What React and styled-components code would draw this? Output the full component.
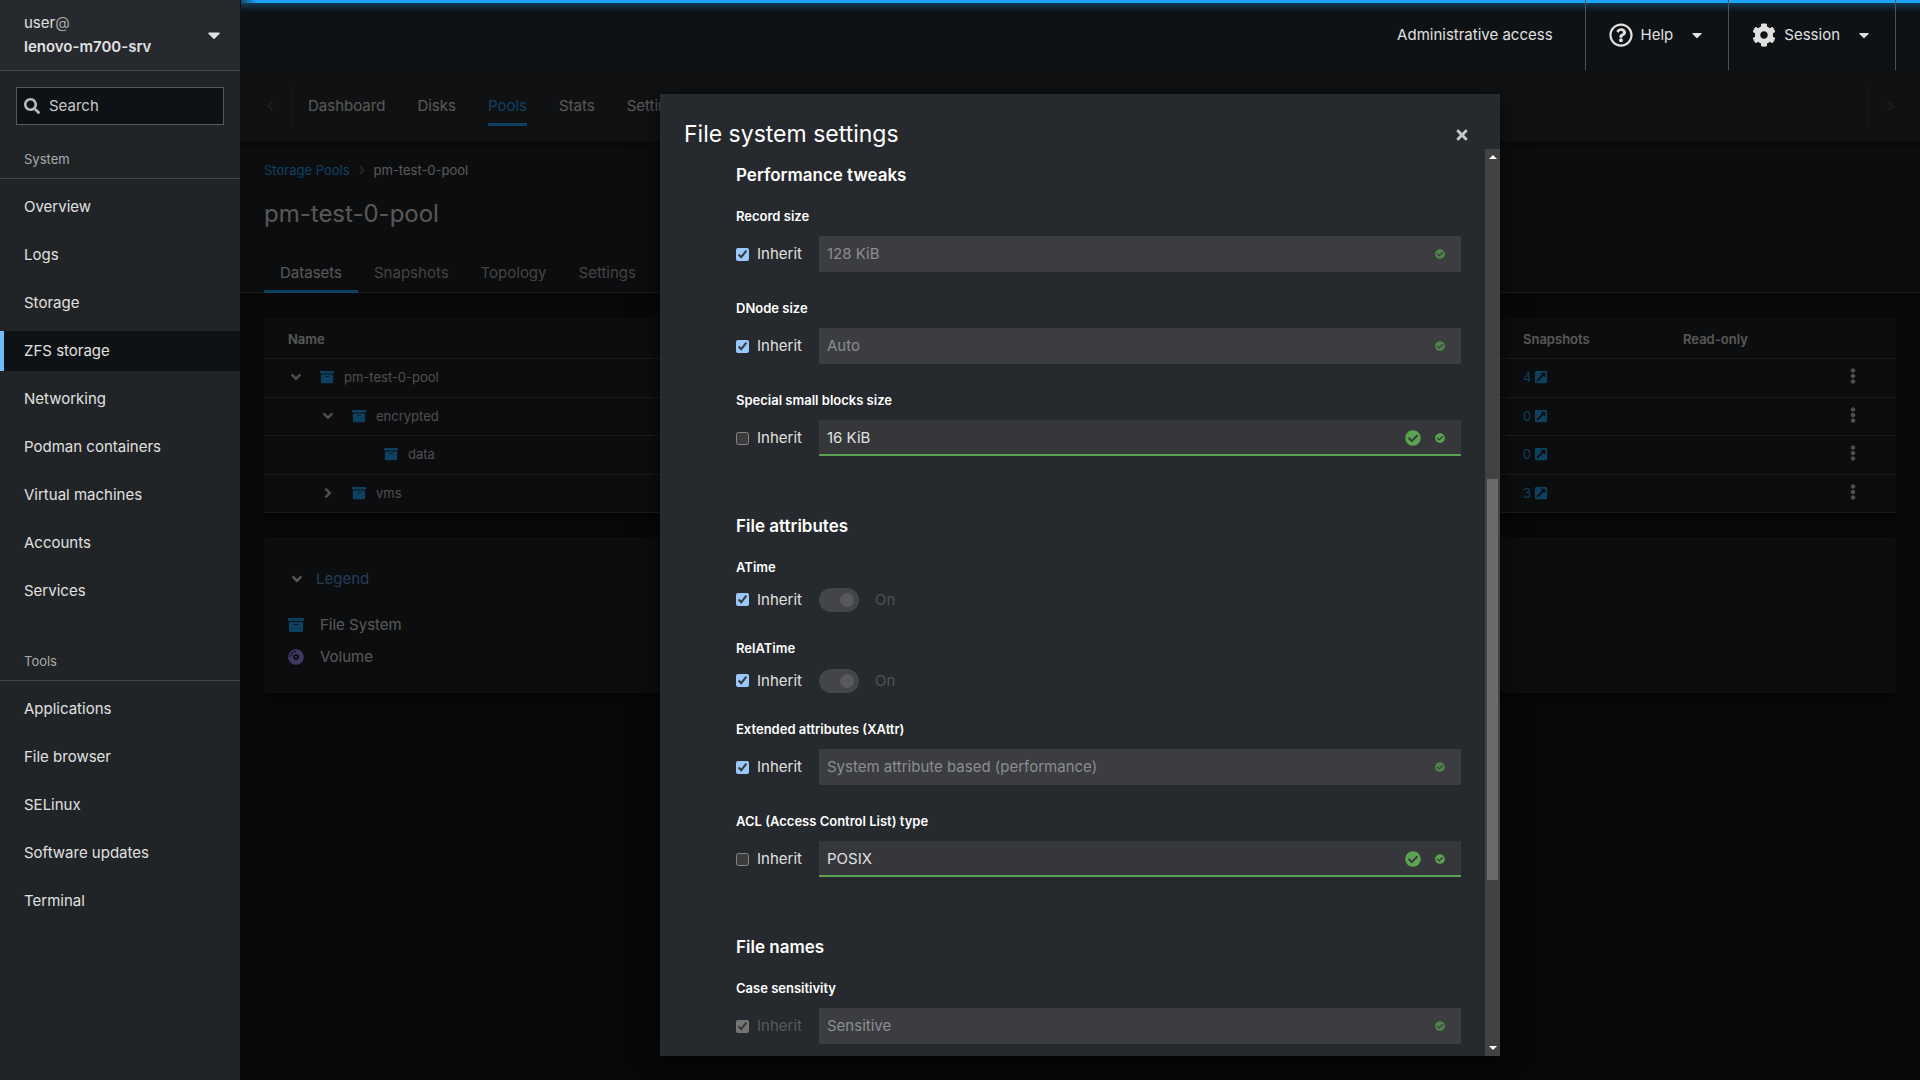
import React from "react";
import styled, { createGlobalStyle, css } from "styled-components";
import {
  FaAngleDown,
  FaAngleLeft,
  FaAngleRight,
  FaArchive,
  FaCaretDown,
  FaCheckCircle,
  FaCog,
  FaCompactDisc,
  FaEllipsisV,
  FaExternalLinkSquareAlt,
  FaRegQuestionCircle,
  FaSearch,
  FaTimes,
} from "react-icons/fa";

const color = {
  text: "#e0e0e0",
  muted: "#aaabac",
  disabled: "#57595c",
  link: "#1fa7f8",
  success: "#5ba352",
  base: "#0f1214",
  panel: "#1b1d21",
  raised: "#26292d",
  sidebar: "#212427",
  line: "#444548",
};

const GlobalStyle = createGlobalStyle`
  *, *::before, *::after { box-sizing: border-box; }
  body {
    margin: 0;
    background: ${color.base};
    color: ${color.text};
    font-family: Inter, "Open Sans", sans-serif;
    font-size: 15px;
    line-height: 24px;
    color-scheme: dark;
  }
  button, input, select { font: inherit; color: inherit; }
  button { border: 0; padding: 0; background: none; text-align: left; cursor: pointer; }
  a { color: inherit; text-decoration: none; }
  h1, h2, h3, ul, ol { margin: 0; padding: 0; font-weight: inherit; }
  ul, ol { list-style: none; }
  svg { display: block; flex: none; }
`;

const Shell = styled.div`
  display: grid;
  grid-template-columns: 240px minmax(0, 1fr);
  height: 100vh;
  overflow: hidden;
`;

/* ---- Sidebar ---- */

const Sidebar = styled.aside`
  background: ${color.sidebar};
`;

const HostSwitcher = styled.button`
  display: flex;
  align-items: center;
  justify-content: space-between;
  width: 100%;
  height: 71px;
  padding: 0 16px 0 24px;
  background: ${color.raised};
  border-bottom: 1px solid ${color.line};
`;

const HostLines = styled.span`
  display: flex;
  flex-direction: column;
`;

const At = styled.span`
  color: ${color.muted};
`;

const HostName = styled.span`
  font-weight: 600;
`;

const SearchBox = styled.label`
  display: flex;
  align-items: center;
  gap: 9px;
  height: 38px;
  margin: 16px 16px 0;
  padding: 0 7px;
  background: ${color.base};
  border: 1px solid #57585a;
  svg { color: #b8bbbe; }
`;

const SearchInput = styled.input`
  flex: 1;
  min-width: 0;
  padding: 0;
  border: 0;
  outline: 0;
  background: none;
  &::placeholder { color: #c9c9ca; opacity: 1; }
`;

const NavSection = styled.section`
  padding: 22px 0 16px;
`;

const NavHeading = styled.h2`
  padding: 0 24px 7px;
  border-bottom: 1px solid ${color.line};
  color: ${color.muted};
  font-size: 13px;
`;

const NavList = styled.ul`
  display: grid;
  gap: 8px;
  padding-top: 8px;
`;

const NavLink = styled.a`
  display: block;
  padding: 8px 20px;
  border-left: 4px solid transparent;
  ${(p) =>
    p.$active &&
    css`
      background: ${color.base};
      border-left-color: #73bcf7;
    `}
`;

/* ---- Top bar ---- */

const Main = styled.div`
  display: flex;
  flex-direction: column;
  min-width: 0;
`;

const TopBar = styled.header`
  position: relative;
  display: flex;
  justify-content: flex-end;
  height: 70px;
  padding-right: 24px;
`;

const LoadingBar = styled.div`
  position: absolute;
  inset: 0 0 auto 1px;
  height: 12px;
  background:
    linear-gradient(90deg, rgba(15, 18, 20, 0.6), transparent 16px) top / 100% 3px no-repeat,
    linear-gradient(#1ca3f9, #1ca3f9) top / 100% 3px no-repeat,
    linear-gradient(#123a56, rgba(18, 58, 86, 0)) bottom / 100% 9px no-repeat;
`;

const TopButton = styled.button`
  position: relative;
  display: flex;
  align-items: center;
  gap: 8px;
  padding: ${(p) => (p.$plain ? "0 32px" : "0 23px")};
  border-right: 1px solid #4f5255;
  span { margin-right: 8px; }
`;

/* ---- Page under the dialog ---- */

const Frame = styled.div`
  position: relative;
  flex: 1;
  min-height: 0;
  overflow: hidden;
`;

const PageNav = styled.nav`
  position: relative;
  display: flex;
  align-items: center;
  height: 72px;
  background: ${color.raised};
  box-shadow: 0 2px 4px rgba(0, 0, 0, 0.5);
`;

const ScrollButton = styled.button`
  display: flex;
  align-items: center;
  justify-content: center;
  width: 52px;
  height: 40px;
  color: ${color.line};
  ${(p) =>
    p.$end
      ? css`margin-left: auto; padding-right: 8px; border-left: 1px solid #3a3b3e;`
      : css`padding-left: 8px; border-right: 1px solid #3a3b3e;`}
`;

const PageLinks = styled.ul`
  display: flex;
  gap: 32px;
  padding-left: 16px;
`;

const PageLink = styled.a`
  display: block;
  padding: 8px 0 5px;
  border-bottom: 3px solid transparent;
  ${(p) => p.$active && css`color: ${color.link}; border-color: ${color.link};`}
`;

const PageHeader = styled.div`
  padding-top: 18px;
  background: ${color.panel};
`;

const Breadcrumb = styled.ol`
  display: flex;
  align-items: center;
  gap: 5px;
  padding: 0 24px;
  font-size: 13px;
  line-height: 20px;
  a { color: ${color.link}; }
  svg { color: #57585a; }
`;

const Crumb = styled.li`
  display: flex;
  align-items: center;
  gap: 5px;
`;

const PageTitle = styled.h1`
  padding: 18px 24px 23px;
  font-size: 24px;
  line-height: 32px;
`;

const Tabs = styled.div`
  display: flex;
  height: 40px;
  padding: 0 24px;
  box-shadow: inset 0 -1px ${color.line};
`;

const Tab = styled.button`
  padding: 2px 16px 0;
  border-bottom: 3px solid transparent;
  color: ${color.muted};
  ${(p) => p.$active && css`color: ${color.text}; border-color: ${color.link};`}
`;

const Content = styled.main`
  display: grid;
  gap: 24px;
  padding: 24px;
`;

const Card = styled.section`
  background: ${color.panel};
  box-shadow: 0 4px 8px rgba(0, 0, 0, 0.6);
`;

const Table = styled.table`
  width: 100%;
  table-layout: fixed;
  border-collapse: separate;
  border-spacing: 0;
  font-size: 13px;
  line-height: 20px;
  th, td { padding: 0; text-align: left; border-bottom: 1px solid ${color.line}; }
  th { height: 42px; padding-top: 3px; font-weight: 600; }
  td { height: 38px; padding-bottom: 2px; color: #c6c7c8; }
  tbody tr:nth-child(odd) td { height: 39px; }
  th:first-child { padding-left: 24px; }
`;

const NameCol = styled.col``;
const Col = styled.col`
  width: ${(p) => p.$w}px;
`;

const NameCell = styled.div`
  display: flex;
  align-items: center;
  padding-left: ${(p) => 24 + p.$depth * 32}px;
`;

const Expander = styled.button`
  display: flex;
  justify-content: center;
  width: 16px;
  margin-right: 16px;
`;

const Blank = styled.span`
  width: 32px;
`;

const FileSystemIcon = styled(FaArchive)`
  margin-right: 10px;
  color: ${color.link};
`;

const CountLink = styled.a`
  display: flex;
  align-items: center;
  gap: 3px;
  color: ${color.link};
`;

const Kebab = styled.button`
  display: flex;
  justify-content: center;
  width: 40px;
  padding-bottom: 2px;
`;

const LegendCard = styled(Card)`
  padding: 24px 24px 20px;
`;

const LegendToggle = styled.button`
  display: flex;
  align-items: center;
  gap: 11px;
  height: 36px;
  margin-bottom: 12px;
  padding-left: 1px;
  color: #5b9be0;
  svg { color: ${color.text}; }
`;

const LegendItem = styled.li`
  display: flex;
  align-items: center;
  gap: 16px;
  height: 32px;
`;

/* ---- Dialog ---- */

const Backdrop = styled.div`
  position: absolute;
  inset: 0;
  display: flex;
  justify-content: center;
  padding: 24px;
  background: rgba(3, 3, 3, 0.62);
`;

const Dialog = styled.section`
  display: flex;
  flex-direction: column;
  width: 100%;
  max-width: 840px;
  background: ${color.raised};
  box-shadow: 0 8px 24px rgba(0, 0, 0, 0.7);
`;

const DialogHeader = styled.header`
  display: flex;
  align-items: center;
  justify-content: space-between;
  height: 55px;
  padding: 24px 24px 0;
`;

const DialogTitle = styled.h2`
  color: #fff;
  font-size: 23px;
  line-height: 32px;
`;

const CloseButton = styled.button`
  padding: 2px 6px 0;
  color: #c6c7c8;
`;

const DialogBody = styled.div`
  display: flex;
  flex: 1;
  min-height: 0;
`;

const Form = styled.form`
  flex: 1;
  min-width: 0;
  overflow-y: auto;
  scrollbar-width: none;
  padding: 12px 24px 12px 76px;
`;

const Group = styled.section`
  margin-bottom: 56px;
`;

const GroupTitle = styled.h3`
  margin-bottom: 17px;
  color: #fff;
  font-size: 17px;
  font-weight: 600;
  line-height: 28px;
`;

const Fields = styled.div`
  display: grid;
  gap: 26px;
`;

const Label = styled.label`
  display: block;
  margin-bottom: 10px;
  color: #fff;
  font-size: 13px;
  font-weight: 600;
  line-height: 20px;
`;

const Line = styled.div`
  display: grid;
  grid-template-columns: 83px minmax(0, 1fr);
  align-items: center;
`;

const Inherit = styled.label`
  display: flex;
  align-items: center;
  gap: 8px;
  color: ${(p) => (p.$locked ? color.disabled : color.text)};
`;

const Tick = styled.input`
  flex: none;
  width: 13px;
  height: 13px;
  margin: 0;
`;

const SelectBox = styled.div`
  position: relative;
`;

const Select = styled.select`
  display: block;
  width: 100%;
  height: 36px;
  padding: 2px 88px 0 8px;
  border: 0;
  border-bottom: 2px solid ${color.success};
  border-radius: 0;
  outline: 0;
  appearance: none;
  background: #36373a;
  &:disabled {
    padding-top: 0;
    background: #3c3d40;
    border-bottom: 0;
    color: #8b8d90;
    opacity: 1;
  }
`;

const Status = styled.span`
  position: absolute;
  top: 0;
  right: 16px;
  display: flex;
  align-items: center;
  gap: 14px;
  height: 36px;
  color: ${color.success};
  opacity: ${(p) => (p.$dim ? 0.7 : 1)};
  pointer-events: none;
`;

const SwitchLine = styled.label`
  display: flex;
  align-items: center;
  gap: 16px;
  height: 25px;
  color: #4f5255;
`;

const Switch = styled.input`
  display: flex;
  align-items: center;
  justify-content: flex-end;
  width: 40px;
  height: 24px;
  margin: 0;
  padding: 0 5px;
  border-radius: 12px;
  appearance: none;
  background: #444548;
  &::before {
    content: "";
    width: 14px;
    height: 14px;
    border-radius: 50%;
    background: #58595b;
  }
`;

const Scrollbar = styled.div`
  display: flex;
  flex-direction: column;
  flex: none;
  width: 15px;
  padding: 0 2px;
  background: #424242;
`;

const ScrollArrow = styled.button`
  display: flex;
  align-items: center;
  justify-content: center;
  height: 16px;
  &::before {
    content: "";
    border: 4px solid transparent;
    border-${(p) => (p.$up ? "bottom" : "top")}-color: #fff;
    border-${(p) => (p.$up ? "top" : "bottom")}-width: 0;
  }
`;

const TrackPart = styled.div`
  flex: ${(p) => p.$part} 0 0;
  background: ${(p) => (p.$thumb ? "#6a6a6a" : "none")};
`;

const systemLinks = [
  "Overview",
  "Logs",
  "Storage",
  "ZFS storage",
  "Networking",
  "Podman containers",
  "Virtual machines",
  "Accounts",
  "Services",
];
const toolLinks = ["Applications", "File browser", "SELinux", "Software updates", "Terminal"];

const datasets = [
  { name: "pm-test-0-pool", depth: 0, open: true, snapshots: 4 },
  { name: "encrypted", depth: 1, open: true, snapshots: 0 },
  { name: "data", depth: 2, leaf: true, snapshots: 0 },
  { name: "vms", depth: 1, open: false, snapshots: 3 },
];

const groups = [
  {
    title: "Performance tweaks",
    fields: [
      { label: "Record size", value: "128 KiB", inherit: true },
      { label: "DNode size", value: "Auto", inherit: true },
      { label: "Special small blocks size", value: "16 KiB", inherit: false },
    ],
  },
  {
    title: "File attributes",
    fields: [
      { label: "ATime", toggle: true, inherit: true },
      { label: "RelATime", toggle: true, inherit: true },
      { label: "Extended attributes (XAttr)", value: "System attribute based (performance)", inherit: true },
      { label: "ACL (Access Control List) type", value: "POSIX", inherit: false },
    ],
  },
  {
    title: "File names",
    fields: [{ label: "Case sensitivity", value: "Sensitive", inherit: true, locked: true }],
  },
];

function Nav({ title, links }) {
  return (
    <NavSection>
      <NavHeading>{title}</NavHeading>
      <NavList>
        {links.map((name) => (
          <li key={name}>
            <NavLink href="#" $active={name === "ZFS storage"}>{name}</NavLink>
          </li>
        ))}
      </NavList>
    </NavSection>
  );
}

function Field({ label, value, toggle, inherit, locked }) {
  const id = label.toLowerCase().replace(/[^a-z]+/g, "-");
  return (
    <div>
      <Label htmlFor={id}>{label}</Label>
      <Line>
        <Inherit $locked={locked}>
          <Tick type="checkbox" defaultChecked={inherit} disabled={locked} />
          Inherit
        </Inherit>
        {toggle ? (
          <SwitchLine>
            <Switch id={id} type="checkbox" role="switch" defaultChecked disabled />
            On
          </SwitchLine>
        ) : (
          <SelectBox>
            <Select id={id} defaultValue={value} disabled={inherit}>
              <option>{value}</option>
            </Select>
            <Status $dim={inherit}>
              {!inherit && <FaCheckCircle size={16} />}
              <FaCheckCircle size={10} />
            </Status>
          </SelectBox>
        )}
      </Line>
    </div>
  );
}

export default function App() {
  return (
    <Shell>
      <GlobalStyle />
      <Sidebar>
        <HostSwitcher>
          <HostLines>
            <span>user<At>@</At></span>
            <HostName>lenovo-m700-srv</HostName>
          </HostLines>
          <FaCaretDown size={20} />
        </HostSwitcher>
        <SearchBox>
          <FaSearch size={16} />
          <SearchInput type="search" placeholder="Search" aria-label="Search" />
        </SearchBox>
        <Nav title="System" links={systemLinks} />
        <Nav title="Tools" links={toolLinks} />
      </Sidebar>

      <Main>
        <TopBar>
          <LoadingBar />
          <TopButton $plain>Administrative access</TopButton>
          <TopButton>
            <FaRegQuestionCircle size={24} />
            <span>Help</span>
            <FaCaretDown size={16} />
          </TopButton>
          <TopButton>
            <FaCog size={24} />
            <span>Session</span>
            <FaCaretDown size={16} />
          </TopButton>
        </TopBar>

        <Frame>
          <PageNav>
            <ScrollButton aria-label="Scroll back"><FaAngleLeft size={16} /></ScrollButton>
            <PageLinks>
              {["Dashboard", "Disks", "Pools", "Stats", "Settings"].map((name) => (
                <li key={name}>
                  <PageLink href="#" $active={name === "Pools"}>{name}</PageLink>
                </li>
              ))}
            </PageLinks>
            <ScrollButton $end aria-label="Scroll forward"><FaAngleRight size={16} /></ScrollButton>
          </PageNav>

          <PageHeader>
            <Breadcrumb>
              <Crumb><a href="#">Storage Pools</a></Crumb>
              <Crumb><FaAngleRight size={14} />pm-test-0-pool</Crumb>
            </Breadcrumb>
            <PageTitle>pm-test-0-pool</PageTitle>
            <Tabs>
              {["Datasets", "Snapshots", "Topology", "Settings"].map((name) => (
                <Tab key={name} $active={name === "Datasets"}>{name}</Tab>
              ))}
            </Tabs>
          </PageHeader>

          <Content>
            <Card>
              <Table>
                <colgroup>
                  <NameCol />
                  <Col $w={160} />
                  <Col $w={150} />
                  <Col $w={63} />
                </colgroup>
                <thead>
                  <tr>
                    <th scope="col">Name</th>
                    <th scope="col">Snapshots</th>
                    <th scope="col">Read-only</th>
                    <th />
                  </tr>
                </thead>
                <tbody>
                  {datasets.map((row) => (
                    <tr key={row.name}>
                      <td>
                        <NameCell $depth={row.depth}>
                          {row.leaf ? (
                            <Blank />
                          ) : (
                            <Expander aria-label={row.name}>
                              {row.open ? <FaAngleDown size={16} /> : <FaAngleRight size={16} />}
                            </Expander>
                          )}
                          <FileSystemIcon size={14} />
                          {row.name}
                        </NameCell>
                      </td>
                      <td>
                        <CountLink href="#">{row.snapshots}<FaExternalLinkSquareAlt size={14} /></CountLink>
                      </td>
                      <td />
                      <td><Kebab aria-label="Actions"><FaEllipsisV size={16} /></Kebab></td>
                    </tr>
                  ))}
                </tbody>
              </Table>
            </Card>

            <LegendCard>
              <LegendToggle><FaAngleDown size={16} />Legend</LegendToggle>
              <ul>
                <LegendItem><FaArchive size={16} color={color.link} />File System</LegendItem>
                <LegendItem><FaCompactDisc size={16} color="#a18fff" />Volume</LegendItem>
              </ul>
            </LegendCard>
          </Content>

          <Backdrop>
            <Dialog role="dialog" aria-label="File system settings">
              <DialogHeader>
                <DialogTitle>File system settings</DialogTitle>
                <CloseButton aria-label="Close"><FaTimes size={16} /></CloseButton>
              </DialogHeader>
              <DialogBody>
                <Form>
                  {groups.map((group) => (
                    <Group key={group.title}>
                      <GroupTitle>{group.title}</GroupTitle>
                      <Fields>
                        {group.fields.map((field) => <Field key={field.label} {...field} />)}
                      </Fields>
                    </Group>
                  ))}
                </Form>
                <Scrollbar>
                  <ScrollArrow $up aria-label="Scroll up" />
                  <TrackPart $part={315} />
                  <TrackPart $part={402} $thumb />
                  <TrackPart $part={160} />
                  <ScrollArrow aria-label="Scroll down" />
                </Scrollbar>
              </DialogBody>
            </Dialog>
          </Backdrop>
        </Frame>
      </Main>
    </Shell>
  );
}
